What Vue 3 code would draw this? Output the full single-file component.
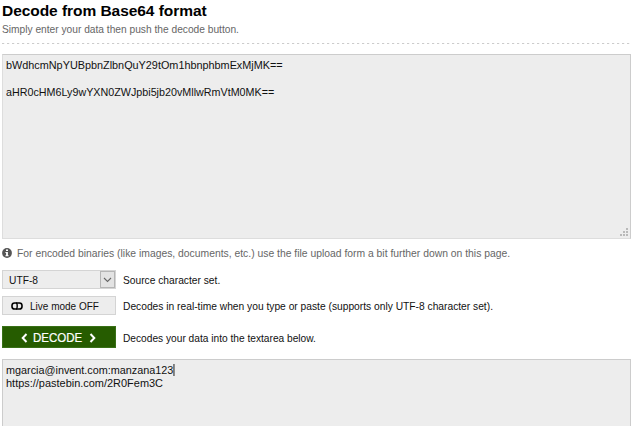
<script setup>
import { ref } from 'vue'

const encoded = ref(['bWdhcmNpYUBpbnZlbnQuY29tOm1hbnphbmExMjMK==', 'aHR0cHM6Ly9wYXN0ZWJpbi5jb20vMllwRmVtM0MK=='])
const decoded = ref(['mgarcia@invent.com:manzana123', 'https://pastebin.com/2R0Fem3C'])
</script>

<template>
  <main class="page">
    <h1><span>Decode from Base64 format</span></h1>
    <p class="intro">Simply enter your data then push the decode button.</p>
    <div class="rule"></div>
    <section class="box source">
      <div class="enc-a">{{ encoded[0] }}</div>
      <br />
      <div class="enc-b">{{ encoded[1] }}</div>
      <svg class="grip" width="8" height="8" viewBox="0 0 8 8" shape-rendering="crispEdges">
        <path d="M6 0h2v2H6zM3 3h2v2H3zM6 3h2v2H6zM0 6h2v2H0zM3 6h2v2H3zM6 6h2v2H6z" fill="#b9b9b9" />
      </svg>
    </section>
    <div class="note">
      <svg width="10" height="10" viewBox="0 0 10 10">
        <circle cx="5" cy="5" r="4.9" fill="#555" />
        <path d="M4 1.5h2v1.6H4zM3.4 4h2.5v3.2h.7v1H3.4v-1h.7V5h-.7z" fill="#fff" />
      </svg>
      <span class="note-text">For encoded binaries (like images, documents, etc.) use the file upload form a bit further down on this page.</span>
    </div>
    <div class="row charset">
      <div class="control select">
        <span class="utf">UTF-8</span>
        <span class="arrow">
          <svg width="9" height="6" viewBox="0 0 9 6"><path d="M1 1l3.5 3.5L8 1" fill="none" stroke="#666" stroke-width="1.1" /></svg>
        </span>
      </div>
      <span class="hint h1t">Source character set.</span>
    </div>
    <div class="row live">
      <div class="control toggle">
        <svg width="12" height="8" viewBox="0 0 12 8">
          <rect x="1" y="1" width="10" height="6" rx="2.6" fill="none" stroke="#000" stroke-width="1.6" />
          <path d="M5 1q1.2 0 1.2 3T5 7" fill="none" stroke="#000" stroke-width="1.4" />
        </svg>
        <span class="live-text">Live mode OFF</span>
      </div>
      <span class="hint h2t">Decodes in real-time when you type or paste (supports only UTF-8 character set).</span>
    </div>
    <div class="row action">
      <div class="decode">
        <svg width="7" height="10" viewBox="0 0 7 10"><path d="M5.5 1L1.7 5l3.8 4" fill="none" stroke="#fff" stroke-width="2" /></svg>
        <span class="decode-text">DECODE</span>
        <svg width="7" height="10" viewBox="0 0 7 10"><path d="M1.5 1l3.8 4-3.8 4" fill="none" stroke="#fff" stroke-width="2" /></svg>
      </div>
      <span class="hint h3t">Decodes your data into the textarea below.</span>
    </div>
    <section class="box result">
      <div class="dec-a">{{ decoded[0] }}<i class="caret"></i></div>
      <div class="dec-b">{{ decoded[1] }}</div>
    </section>
  </main>
</template>

<style>
body { margin: 0; background: #fff; overflow: hidden; }
</style>

<style scoped>
* { box-sizing: border-box; }
.page { width: 631px; height: 426px; padding-left: 2px; overflow: hidden; display: flex; flex-direction: column; font-family: "Liberation Sans", Arial, sans-serif; font-size: 11px; color: #111; white-space: nowrap; }
.page > * { flex-shrink: 0; }
h1 { margin: 0; height: 22px; font-size: 15.5px; line-height: 21px; color: #000; letter-spacing: -.05px; }
.intro, .enc-a, .enc-b, .dec-a, .dec-b, .note-text, .hint, .live-text, .utf, .decode-text { transform-origin: left center; }
.intro { margin: 0; height: 21px; line-height: 15px; color: #666; transform: scaleX(.927); }
.rule { height: 1px; margin-bottom: 10px; background: repeating-linear-gradient(90deg, #ccc 0 2px, #f4f4f4 2px 3px, #fff 3px 5px); }
.box { position: relative; background: #ededed; border: 1px solid #ccc; padding: 4px 3px; line-height: 13.5px; font-size: 11.5px; color: #111; }
.enc-a { transform: scaleX(.943); }
.enc-b { transform: scaleX(.934); }
.dec-a { transform: scaleX(.941); height: 13px; }
.dec-b { transform: scaleX(.952); }
.source { height: 185px; border-bottom-color: #ddd; border-left-color: #ddd; }
.grip { position: absolute; right: 2px; bottom: 2px; }
.note { display: flex; align-items: center; gap: 5px; height: 14px; margin-top: 7px; color: #666; }
.note-text { transform: scaleX(.941); }
.row { display: flex; align-items: center; gap: 6.6px; }
.charset { height: 19px; margin-top: 10px; }
.live { height: 19px; margin-top: 7px; }
.action { height: 22px; margin-top: 11px; }
.h1t { transform: scaleX(.93); }
.h2t { transform: scaleX(.931); }
.h3t { transform: scaleX(.925); padding-top: 1px; }
.control { display: flex; flex-shrink: 0; align-items: center; width: 114px; height: 19px; background: #ededed; border: 1px solid #d4d4d4; }
.select { justify-content: space-between; padding-left: 5.5px; }
.utf { transform: scaleX(.93); }
.arrow { display: flex; align-items: center; justify-content: center; width: 15px; height: 17px; background: #e3e3e3; border: 1px solid #b5b5b5; }
.toggle { padding-left: 8px; gap: 7px; }
.live-text { transform: scaleX(.91); }
.decode { display: flex; flex-shrink: 0; align-items: center; padding: 1px 0 0 18px; gap: 5px; width: 114px; height: 22px; background: #265c00; border: 1px solid #397017; color: #fff; font-size: 12px; }
.decode-text { transform: scaleX(.96); -webkit-text-stroke: .2px #fff; }
.result { height: 80px; margin-top: 11px; }
.caret { display: inline-block; width: 1px; height: 12px; background: #111; vertical-align: -2px; }
</style>
